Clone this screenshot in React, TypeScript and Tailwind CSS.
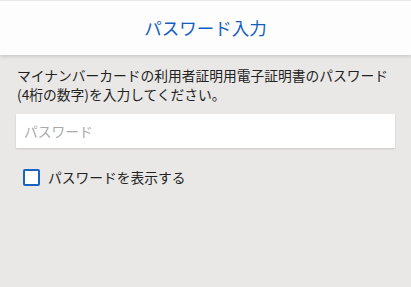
import React, { useState } from "react";

const App: React.FC = () => {
  const [show, setShow] = useState(false);

  return (
    <div
      className="w-[411px] h-[287px] bg-[#e9e8e6] flex flex-col overflow-hidden"
      style={{ fontFamily: '"Noto Sans CJK JP", Roboto, sans-serif' }}
    >
      <header className="mt-px h-[54px] bg-[#fdfdfd] flex items-center justify-center shadow-[0_2px_3px_rgba(0,0,0,0.12)] shrink-0">
        <h1 className="text-[17.5px] text-[#1560bd] leading-none">パスワード入力</h1>
      </header>

      <div className="px-4 pt-[11px]">
        <p className="pl-px text-[13.75px] leading-[18.5px] text-[#222]">
          マイナンバーカードの利用者証明用電子証明書のパスワード
          <br />
          (4桁の数字)を入力してください。
        </p>

        <input
          type={show ? "text" : "password"}
          placeholder="パスワード"
          className="mt-[11px] w-[379px] h-[34px] bg-white px-2 text-[13.75px] text-[#222] placeholder:text-[#aaa] outline-none shadow-[0_1px_2px_rgba(0,0,0,0.15)]"
        />

        <label className="mt-[19px] ml-[7px] flex items-center gap-[8px] text-[13.75px] text-[#222] cursor-pointer">
          <input
            type="checkbox"
            checked={show}
            onChange={() => setShow((v) => !v)}
            className="appearance-none w-[17px] h-[17px] border-2 border-[#1a63c0] rounded-[2px] bg-white checked:bg-[#1a63c0]"
          />
          パスワードを表示する
        </label>
      </div>
    </div>
  );
};

export default App;
